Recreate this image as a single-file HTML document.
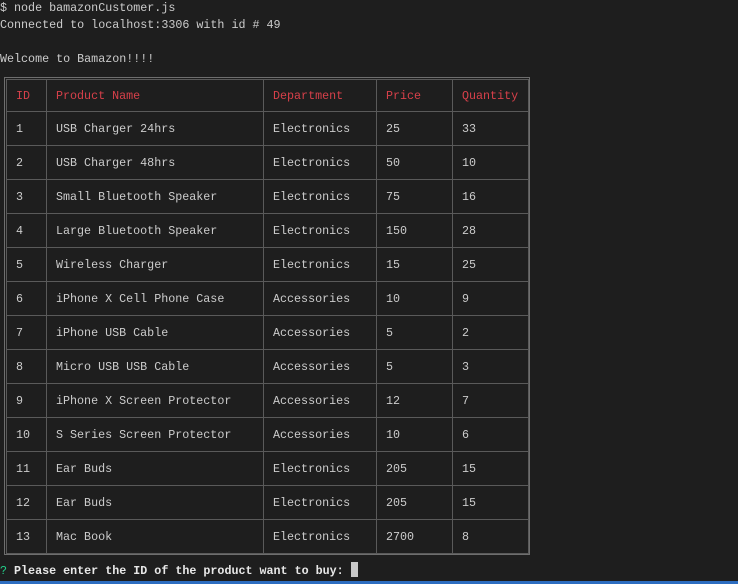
<!DOCTYPE html>
<html><head><style>
html,body{margin:0;padding:0;background:#1e1e1e;width:738px;height:584px;overflow:hidden;font-family:"Liberation Mono",monospace;font-size:11.7px;color:#cccccc}
.l{position:absolute;left:0;white-space:pre;line-height:17px}
.box{position:absolute;left:4px;top:77px;width:524px;height:476px;border:1px solid #6e6e6e}
table{position:absolute;left:1px;top:1px;border-collapse:collapse;table-layout:fixed}
td{border:1px solid #5a5a5a;height:34px;padding:0 0 0 9px;white-space:pre;box-sizing:border-box}
tr.h td{color:#d7404a;height:32px}
</style></head><body>
<div class="l" style="top:0">$ node bamazonCustomer.js</div>
<div class="l" style="top:17px">Connected to localhost:3306 with id # 49</div>
<div class="l" style="top:51px">Welcome to Bamazon!!!!</div>
<div class="box"><table>
<colgroup><col style="width:40px"><col style="width:217px"><col style="width:113px"><col style="width:76px"><col style="width:76px"></colgroup>
<tr class="h"><td>ID</td><td>Product Name</td><td>Department</td><td>Price</td><td>Quantity</td></tr>
<tr><td>1</td><td>USB Charger 24hrs</td><td>Electronics</td><td>25</td><td>33</td></tr>
<tr><td>2</td><td>USB Charger 48hrs</td><td>Electronics</td><td>50</td><td>10</td></tr>
<tr><td>3</td><td>Small Bluetooth Speaker</td><td>Electronics</td><td>75</td><td>16</td></tr>
<tr><td>4</td><td>Large Bluetooth Speaker</td><td>Electronics</td><td>150</td><td>28</td></tr>
<tr><td>5</td><td>Wireless Charger</td><td>Electronics</td><td>15</td><td>25</td></tr>
<tr><td>6</td><td>iPhone X Cell Phone Case</td><td>Accessories</td><td>10</td><td>9</td></tr>
<tr><td>7</td><td>iPhone USB Cable</td><td>Accessories</td><td>5</td><td>2</td></tr>
<tr><td>8</td><td>Micro USB USB Cable</td><td>Accessories</td><td>5</td><td>3</td></tr>
<tr><td>9</td><td>iPhone X Screen Protector</td><td>Accessories</td><td>12</td><td>7</td></tr>
<tr><td>10</td><td>S Series Screen Protector</td><td>Accessories</td><td>10</td><td>6</td></tr>
<tr><td>11</td><td>Ear Buds</td><td>Electronics</td><td>205</td><td>15</td></tr>
<tr><td>12</td><td>Ear Buds</td><td>Electronics</td><td>205</td><td>15</td></tr>
<tr><td>13</td><td>Mac Book</td><td>Electronics</td><td>2700</td><td>8</td></tr>
</table></div>
<div class="l" style="top:562px;font-weight:bold;color:#e8e8e8"><span style="color:#23d18b;font-weight:normal">?</span> Please enter the ID of the product want to buy: <span style="display:inline-block;width:7px;height:15px;background:#c8c8c8;vertical-align:-3px"></span></div>
<div style="position:absolute;left:0;top:581px;width:738px;height:3px;background:#2d6dc0"></div>
</body></html>
